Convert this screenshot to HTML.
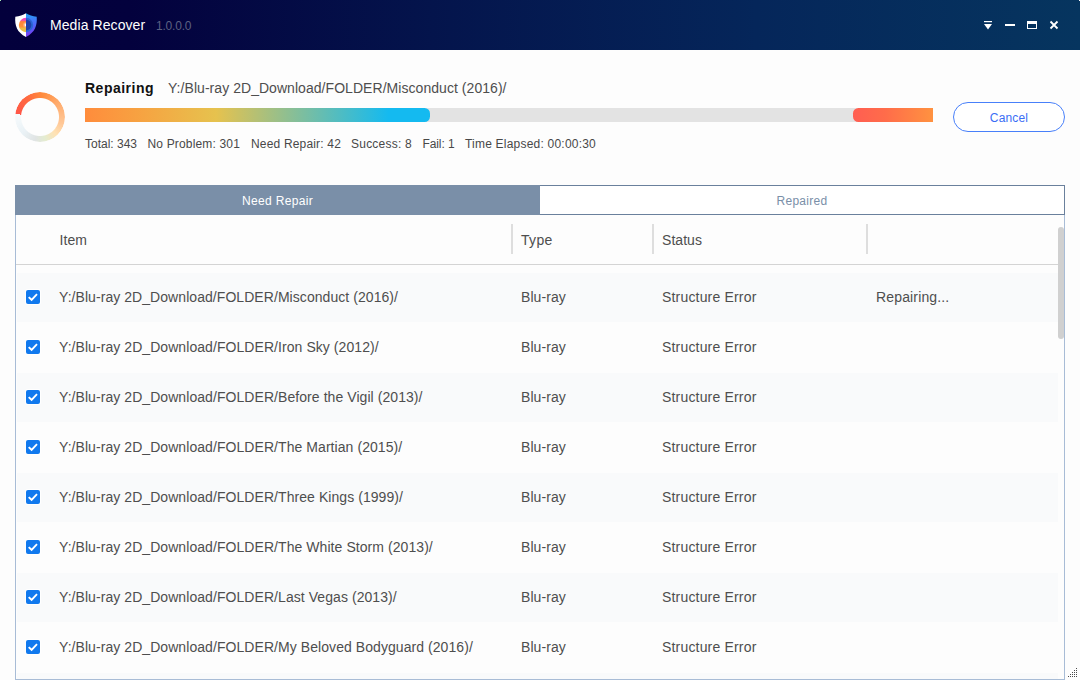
<!DOCTYPE html>
<html><head><meta charset="utf-8">
<style>
*{box-sizing:border-box;margin:0;padding:0}
html,body{width:1080px;height:680px;overflow:hidden;background:#fdfdfd;font-family:"Liberation Sans",sans-serif;}
.abs{position:absolute}
#title{position:absolute;left:0;top:0;width:1080px;height:50px;background:linear-gradient(90deg,#03003c 0%,#03013d 12%,#04144c 40%,#05265a 70%,#06355f 100%);}
#title .name{position:absolute;left:50px;top:16px;letter-spacing:0.08px;font-size:14px;color:#fff;line-height:18px;white-space:nowrap}
#title .ver{position:absolute;left:156px;top:19px;letter-spacing:-0.2px;font-size:12px;color:#5c6182;line-height:14px;white-space:nowrap}
.lbl{position:absolute;white-space:nowrap;color:#4e4e4e;font-size:14px;line-height:18px;letter-spacing:0.05px}
.row{position:absolute;left:16px;width:1042px;height:50px}
.row.g{background:linear-gradient(#f9fafb,#f9fafb) no-repeat 1px 1px / 1041px 49px}
.row .cb{position:absolute;left:10px;top:18px;width:14px;height:14px;border-radius:2px;background:#1179ee;box-shadow:0 0 0 1px #fff}
.row span{position:absolute;top:16px;font-size:14px;line-height:18px;color:#4e4e4e;white-space:nowrap;letter-spacing:0.065px}
.st{top:135.5px;font-size:12px!important;line-height:16px!important;color:#484848}
</style></head><body>
<div id="title">
<svg class="abs" style="left:14px;top:12px" width="24" height="26" viewBox="0 0 24 26">
<defs><linearGradient id="sr" x1="0" y1="0" x2="0" y2="1"><stop offset="0" stop-color="#18a8f0"/><stop offset="0.2" stop-color="#3a84fa"/><stop offset="0.55" stop-color="#5560f8"/><stop offset="1" stop-color="#7a38ee"/></linearGradient>
<linearGradient id="dl" x1="0" y1="0" x2="0" y2="1"><stop offset="0" stop-color="#ee44c8"/><stop offset="0.17" stop-color="#f04cb0"/><stop offset="0.27" stop-color="#ff8438"/><stop offset="0.62" stop-color="#ff9238"/><stop offset="0.74" stop-color="#ecbc44"/><stop offset="1" stop-color="#e4c448"/></linearGradient></defs>
<path d="M12 1.2 C9 3.2 5.5 4.3 1.3 4.8 C0.6 13.5 3 20.5 12 25 Z" fill="#fff"/>
<path d="M12 1.2 C15 3.2 18.5 4.3 22.7 4.8 C23.4 13.5 21 20.5 12 25 Z" fill="url(#sr)"/>
<path d="M12 5.8 A7.2 7.2 0 0 0 12 20.2 Z" fill="url(#dl)"/>
<path d="M12 5.8 A7.2 7.2 0 0 1 12 20.2 Z" fill="#2a66d4"/>
<path d="M12 7.6 A5.4 5.4 0 0 1 12 18.4 Z" fill="#2140a8"/>
<path d="M12 10.2 A2.8 2.8 0 0 0 12 15.8 Z" fill="#ffb070"/>
<path d="M12 11.6 A1.4 1.4 0 0 0 12 14.4 Z" fill="#fff"/>
</svg>
<div class="name">Media Recover</div><div class="ver">1.0.0.0</div>
<svg class="abs" style="left:980px;top:18px" width="84" height="14" viewBox="0 0 84 14">
<rect x="4" y="3" width="8" height="1.2" fill="#fff"/><path d="M4 6 L12 6 L8 11.4 Z" fill="#fff"/>
<rect x="25" y="6" width="10" height="2" fill="#fff"/>
<rect x="47.5" y="4" width="9" height="6.5" fill="none" stroke="#fff" stroke-width="1"/><rect x="47" y="3" width="10" height="3" fill="#fff"/>
<path d="M70.5 3.5 L77.5 10.5 M77.5 3.5 L70.5 10.5" stroke="#fff" stroke-width="1.8"/>
</svg>
</div>

<!-- spinner -->
<div class="abs" style="left:15px;top:92px;width:50px;height:50px;border-radius:50%;background:conic-gradient(from 277deg,#ff5648 0deg,#ff6a40 50deg,#ff8c3c 90deg,#ffa868 130deg,#ffc898 190deg,#ffe2b4 220deg,#e4ecd0 250deg,#e0e4e4 275deg,#eaf2f6 310deg,#f6fafc 360deg);-webkit-mask:radial-gradient(circle,transparent 18.5px,#000 19.5px);mask:radial-gradient(circle,transparent 18.5px,#000 19.5px)"></div>

<div class="lbl" style="left:85px;top:79px;font-weight:bold;color:#111;letter-spacing:0.5px">Repairing</div>
<div class="lbl" style="left:168px;top:79px;">Y:/Blu-ray 2D_Download/FOLDER/Misconduct (2016)/</div>
<div class="abs" style="left:85px;top:108px;width:848px;height:14px;background:#e3e3e3"></div>
<div class="abs" style="left:85px;top:108px;width:345px;height:14px;border-radius:0 5.5px 5.5px 0;background:linear-gradient(90deg,#ff8c3c 0%,#f6a442 17%,#e6c24e 38%,#14baf0 88%,#14baf0 100%)"></div>
<div class="abs" style="left:853px;top:108px;width:80px;height:14px;border-radius:5.5px 0 0 5.5px;background:linear-gradient(90deg,#ff5e52 0%,#ff6c4a 40%,#ff9240 100%)"></div>
<div class="lbl st" style="left:85px;letter-spacing:-0.005px">Total: 343</div>
<div class="lbl st" style="left:147.5px;letter-spacing:0.163px">No Problem: 301</div>
<div class="lbl st" style="left:251px;letter-spacing:0.174px">Need Repair: 42</div>
<div class="lbl st" style="left:351px;letter-spacing:0.230px">Success: 8</div>
<div class="lbl st" style="left:422.5px;letter-spacing:-0.099px">Fail: 1</div>
<div class="lbl st" style="left:465px;letter-spacing:0.213px">Time Elapsed: 00:00:30</div>

<div class="abs" style="left:953px;top:102px;width:112px;height:30px;border:1px solid #4880fa;border-radius:15px;color:#3a6ef5;font-size:12px;line-height:30px;text-align:center;background:#fff;letter-spacing:0.15px">Cancel</div>

<!-- table -->
<div class="abs" style="left:15px;top:185px;width:1050px;height:495px;border:1px solid #a8bcd6;border-top:none;background:#fdfdfd"></div>
<div class="abs" style="left:15px;top:185px;width:525px;height:30px;background:#7a8fa8;color:#fff;font-size:12px;line-height:32px;text-align:center;letter-spacing:0.35px">Need Repair</div>
<div class="abs" style="left:540px;top:185px;width:525px;height:30px;background:#fff;border:1px solid #6a809c;border-left:none;color:#7a8fa8;font-size:12px;line-height:31px;text-align:center;letter-spacing:0.3px">Repaired</div>
<div class="lbl" style="left:59.5px;top:231px">Item</div>
<div class="lbl" style="left:521px;top:231px;letter-spacing:0.3px">Type</div>
<div class="lbl" style="left:662px;top:231px">Status</div>
<div class="abs" style="left:511px;top:224px;width:2px;height:30px;background:#dedede"></div>
<div class="abs" style="left:652px;top:224px;width:2px;height:30px;background:#dedede"></div>
<div class="abs" style="left:866px;top:224px;width:2px;height:30px;background:#dedede"></div>
<div class="abs" style="left:16px;top:264px;width:1042px;height:1px;background:#d4d4d4"></div>
<div class="abs" style="left:1058px;top:227px;width:6px;height:112px;border-radius:3px;background:#d0d0d0"></div>
<div class="row g" style="top:272px"><svg class="cb" viewBox="0 0 14 14"><path d="M2.7 7.1 L5.6 9.8 L11 4.1" fill="none" stroke="#fff" stroke-width="1.9"/></svg><span style="left:43px;letter-spacing:0.06px">Y:/Blu-ray 2D_Download/FOLDER/Misconduct (2016)/</span><span style="left:505px">Blu-ray</span><span style="left:646px;letter-spacing:0.18px">Structure Error</span><span style="left:860px;letter-spacing:0.15px">Repairing...</span></div>
<div class="row" style="top:322px"><svg class="cb" viewBox="0 0 14 14"><path d="M2.7 7.1 L5.6 9.8 L11 4.1" fill="none" stroke="#fff" stroke-width="1.9"/></svg><span style="left:43px">Y:/Blu-ray 2D_Download/FOLDER/Iron Sky (2012)/</span><span style="left:505px">Blu-ray</span><span style="left:646px;letter-spacing:0.18px">Structure Error</span></div>
<div class="row g" style="top:372px"><svg class="cb" viewBox="0 0 14 14"><path d="M2.7 7.1 L5.6 9.8 L11 4.1" fill="none" stroke="#fff" stroke-width="1.9"/></svg><span style="left:43px">Y:/Blu-ray 2D_Download/FOLDER/Before the Vigil (2013)/</span><span style="left:505px">Blu-ray</span><span style="left:646px;letter-spacing:0.18px">Structure Error</span></div>
<div class="row" style="top:422px"><svg class="cb" viewBox="0 0 14 14"><path d="M2.7 7.1 L5.6 9.8 L11 4.1" fill="none" stroke="#fff" stroke-width="1.9"/></svg><span style="left:43px">Y:/Blu-ray 2D_Download/FOLDER/The Martian (2015)/</span><span style="left:505px">Blu-ray</span><span style="left:646px;letter-spacing:0.18px">Structure Error</span></div>
<div class="row g" style="top:472px"><svg class="cb" viewBox="0 0 14 14"><path d="M2.7 7.1 L5.6 9.8 L11 4.1" fill="none" stroke="#fff" stroke-width="1.9"/></svg><span style="left:43px">Y:/Blu-ray 2D_Download/FOLDER/Three Kings (1999)/</span><span style="left:505px">Blu-ray</span><span style="left:646px;letter-spacing:0.18px">Structure Error</span></div>
<div class="row" style="top:522px"><svg class="cb" viewBox="0 0 14 14"><path d="M2.7 7.1 L5.6 9.8 L11 4.1" fill="none" stroke="#fff" stroke-width="1.9"/></svg><span style="left:43px">Y:/Blu-ray 2D_Download/FOLDER/The White Storm (2013)/</span><span style="left:505px">Blu-ray</span><span style="left:646px;letter-spacing:0.18px">Structure Error</span></div>
<div class="row g" style="top:572px"><svg class="cb" viewBox="0 0 14 14"><path d="M2.7 7.1 L5.6 9.8 L11 4.1" fill="none" stroke="#fff" stroke-width="1.9"/></svg><span style="left:43px">Y:/Blu-ray 2D_Download/FOLDER/Last Vegas (2013)/</span><span style="left:505px">Blu-ray</span><span style="left:646px;letter-spacing:0.18px">Structure Error</span></div>
<div class="row" style="top:622px"><svg class="cb" viewBox="0 0 14 14"><path d="M2.7 7.1 L5.6 9.8 L11 4.1" fill="none" stroke="#fff" stroke-width="1.9"/></svg><span style="left:43px">Y:/Blu-ray 2D_Download/FOLDER/My Beloved Bodyguard (2016)/</span><span style="left:505px">Blu-ray</span><span style="left:646px;letter-spacing:0.18px">Structure Error</span></div>
<div class="row g" style="top:672px;height:7px"></div>

<svg class="abs" style="left:1066px;top:666px" width="12" height="12" fill="#4a4a4a" shape-rendering="crispEdges"><rect x="10" y="10" width="1" height="1"/><rect x="8" y="10" width="1" height="1"/><rect x="6" y="10" width="1" height="1"/><rect x="4" y="10" width="1" height="1"/><rect x="2" y="10" width="1" height="1"/><rect x="10" y="8" width="1" height="1"/><rect x="8" y="8" width="1" height="1"/><rect x="6" y="8" width="1" height="1"/><rect x="4" y="8" width="1" height="1"/><rect x="10" y="6" width="1" height="1"/><rect x="8" y="6" width="1" height="1"/><rect x="6" y="6" width="1" height="1"/><rect x="10" y="4" width="1" height="1"/><rect x="8" y="4" width="1" height="1"/><rect x="10" y="2" width="1" height="1"/></svg>
<div class="abs" style="left:0;top:0;width:1px;height:1px;background:#a8e8b8"></div><div class="abs" style="left:1079px;top:0;width:1px;height:1px;background:#fff"></div>
</body></html>
